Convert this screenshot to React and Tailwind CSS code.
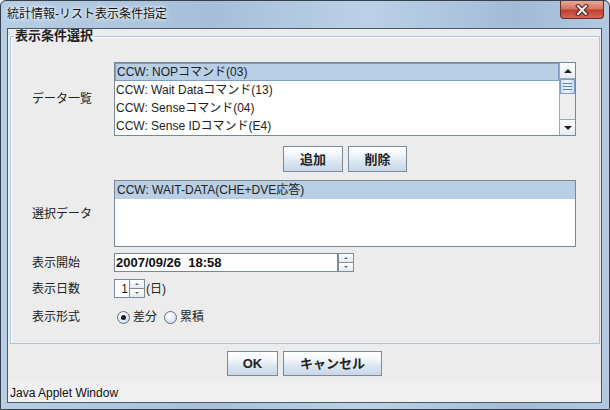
import React from "react";

const FONT = { fontFamily: '"Liberation Sans", "Noto Sans CJK JP", sans-serif' };

function AquaButton({ children, className = "" }) {
  return (
    <div
      className={`flex items-center justify-center border border-[#7d8b99] bg-[linear-gradient(180deg,#ffffff_0%,#f4f7fb_30%,#dde7f2_60%,#c6d6e8_100%)] text-[13px] font-bold text-[#222] leading-none ${className}`}
    >
      {children}
    </div>
  );
}

function Arrow({ dir, size = 4 }) {
  // small filled triangle
  return dir === "up" ? (
    <div className="w-0 h-0 border-l-transparent border-r-transparent border-b-[#222]" style={{ borderLeftWidth: size, borderRightWidth: size, borderBottomWidth: size, borderStyle: "solid", borderTopWidth: 0 }} />
  ) : (
    <div className="w-0 h-0 border-l-transparent border-r-transparent border-t-[#222]" style={{ borderLeftWidth: size, borderRightWidth: size, borderTopWidth: size, borderStyle: "solid", borderBottomWidth: 0 }} />
  );
}

function SpinButtons({ className = "" }) {
  return (
    <div className={`flex flex-col w-[16px] h-full border border-[#7e8c9a] ${className}`}>
      <div className="flex-1 flex items-center justify-center bg-[linear-gradient(180deg,#ffffff,#e4ebf3)] border-b border-[#7e8c9a]">
        <div className="w-0 h-0 border-l-[2px] border-r-[2px] border-b-[2px] border-l-transparent border-r-transparent border-b-[#666]" />
      </div>
      <div className="flex-1 flex items-center justify-center bg-[linear-gradient(180deg,#ffffff,#e4ebf3)]">
        <div className="w-0 h-0 border-l-[2px] border-r-[2px] border-t-[2px] border-l-transparent border-r-transparent border-t-[#666]" />
      </div>
    </div>
  );
}

function Radio({ checked, label }) {
  return (
    <div className="flex items-center gap-[3px]">
      <div className="w-[13px] h-[13px] rounded-full border border-[#5f6f80] bg-[radial-gradient(circle_at_40%_35%,#ffffff,#dfe7f0_60%,#b9c7d6)] flex items-center justify-center">
        {checked && <div className="w-[5px] h-[5px] rounded-full bg-[#1e1e1e]" />}
      </div>
      <span className="text-[12px] text-[#222]">{label}</span>
    </div>
  );
}

const rows = [
  "CCW: NOPコマンド(03)",
  "CCW: Wait Dataコマンド(13)",
  "CCW: Senseコマンド(04)",
  "CCW: Sense IDコマンド(E4)",
];

export default function App() {
  return (
    <div className="w-[610px] h-[410px] bg-[#ececec]" style={FONT}>
      <div className="w-[610px] h-[410px] flex flex-col border border-[#34404e] rounded-t-[6px] bg-[linear-gradient(90deg,#b7cde4,#a6bfd9_35%,#bcd1e7_60%,#a2bbd6_85%,#b3c9e1)]">
        {/* title bar */}
        <div className="h-[27px] flex items-start justify-between pl-[6px] pr-[5px]">
          <span className="mt-[6px] text-[12px] leading-[14px] text-[#111] [text-shadow:0_0_6px_#ffffff,0_0_3px_#ffffff]">統計情報-リスト表示条件指定</span>
          <div className="w-[44px] h-[18px] rounded-b-[4px] border border-t-0 border-[#6b2a22] bg-[linear-gradient(180deg,#e8a898_0%,#d57563_45%,#bf3f2d_55%,#d2685a_100%)] flex items-center justify-center">
            <svg width="14" height="12" viewBox="0 0 14 12">
              <path d="M3 2 L11 10 M11 2 L3 10" stroke="#4a1a14" strokeWidth="4" strokeLinecap="square" />
              <path d="M3 2 L11 10 M11 2 L3 10" stroke="#ffffff" strokeWidth="2" strokeLinecap="square" />
            </svg>
          </div>
        </div>

        {/* client */}
        <div className="ml-[6px] mr-[7px] mb-[6px] flex-1 border border-[#4a5867] bg-[#ececec] flex flex-col">
          <fieldset className="ml-[2px] mr-[1px] border border-[#a9c5e0] shadow-[inset_1px_1px_0_#ffffff] pt-[19px] pb-[17px]">
            <legend className="ml-[3px] px-[1px] text-[13px] font-bold leading-[14px] text-[#222]">表示条件選択</legend>

            <div className="pl-[21px]">
              {/* data list */}
              <div className="flex items-center h-[74px]">
                <div className="w-[82px] text-[12px] text-[#222]">データ一覧</div>
                <div className="w-[462px] h-[74px] border border-[#7a8796] bg-white flex">
                  <div className="flex-1 flex flex-col">
                    {rows.map((r, i) => (
                      <div
                        key={r}
                        className={`h-[18px] pl-[1px] flex items-center text-[12px] text-[#222] whitespace-nowrap ${i === 0 ? "bg-[#b8cfe5] border border-[#7c9cc2]" : ""}`}
                      >
                        {r}
                      </div>
                    ))}
                  </div>
                  <div className="w-[16px] flex flex-col bg-[#eeeeee] border-l border-[#9aa7b4]">
                    <div className="h-[16px] flex items-center justify-center border-b border-[#9aa7b4] bg-[linear-gradient(180deg,#ffffff,#e6ecf2)]">
                      <Arrow dir="up" size={4} />
                    </div>
                    <div className="h-[15px] flex flex-col items-center justify-center gap-[2px] border border-[#7f9cc0] bg-[linear-gradient(90deg,#c6d9ef,#f2f7fc_50%,#c6d9ef)]">
                      <div className="w-[9px] h-px bg-[#5c86b8]" />
                      <div className="w-[9px] h-px bg-[#5c86b8]" />
                      <div className="w-[9px] h-px bg-[#5c86b8]" />
                    </div>
                    <div className="flex-1" />
                    <div className="h-[16px] flex items-center justify-center border-t border-[#9aa7b4] bg-[linear-gradient(180deg,#ffffff,#e6ecf2)]">
                      <Arrow dir="down" size={4} />
                    </div>
                  </div>
                </div>
              </div>

              {/* add / remove */}
              <div className="mt-[10px] ml-[82px] w-[462px] flex justify-center gap-[5px]">
                <AquaButton className="w-[60px] h-[26px]">追加</AquaButton>
                <AquaButton className="w-[59px] h-[26px]">削除</AquaButton>
              </div>

              {/* selected list */}
              <div className="mt-[8px] flex items-center h-[67px]">
                <div className="w-[82px] text-[12px] text-[#222]">選択データ</div>
                <div className="w-[462px] h-[67px] border border-[#7a8796] bg-white">
                  <div className="h-[18px] pl-[2px] flex items-center bg-[#b8cfe5] text-[12px] text-[#222] whitespace-nowrap">
                    CCW: WAIT-DATA(CHE+DVE応答)
                  </div>
                </div>
              </div>

              {/* start date */}
              <div className="mt-[6px] flex items-center h-[19px]">
                <div className="w-[82px] text-[12px] text-[#222]">表示開始</div>
                <div className="flex h-[19px]">
                  <div className="w-[224px] h-[19px] border border-[#7a8796] bg-white flex items-center pl-[1px] text-[13px] font-bold text-[#111] whitespace-pre">
                    2007/09/26  18:58
                  </div>
                  <SpinButtons />
                </div>
              </div>

              {/* days */}
              <div className="mt-[7px] flex items-center h-[19px]">
                <div className="w-[82px] text-[12px] text-[#222]">表示日数</div>
                <div className="flex h-[19px]">
                  <div className="w-[15px] h-[19px] border border-[#7a8796] border-r-0 bg-white flex items-center justify-end pr-[1px] text-[12px] text-[#222]">1</div>
                  <SpinButtons />
                </div>
                <span className="ml-[1px] text-[12px] text-[#222]">(日)</span>
              </div>

              {/* format */}
              <div className="mt-[10px] flex items-center h-[18px]">
                <div className="w-[82px] text-[12px] text-[#222]">表示形式</div>
                <div className="flex items-center gap-[7px] pl-[3px]">
                  <Radio checked label="差分" />
                  <Radio label="累積" />
                </div>
              </div>
            </div>
          </fieldset>

          {/* ok / cancel */}
          <div className="mt-[7px] h-[25px] flex justify-center gap-[5px]">
            <AquaButton className="w-[51px] h-[25px]">OK</AquaButton>
            <AquaButton className="w-[99px] h-[25px]">キャンセル</AquaButton>
          </div>

          <div className="mt-auto h-[19px] bg-[#f0f0f0] flex items-center pl-[2px] text-[12px] text-[#111]">
            Java Applet Window
          </div>
        </div>
      </div>
    </div>
  );
}
